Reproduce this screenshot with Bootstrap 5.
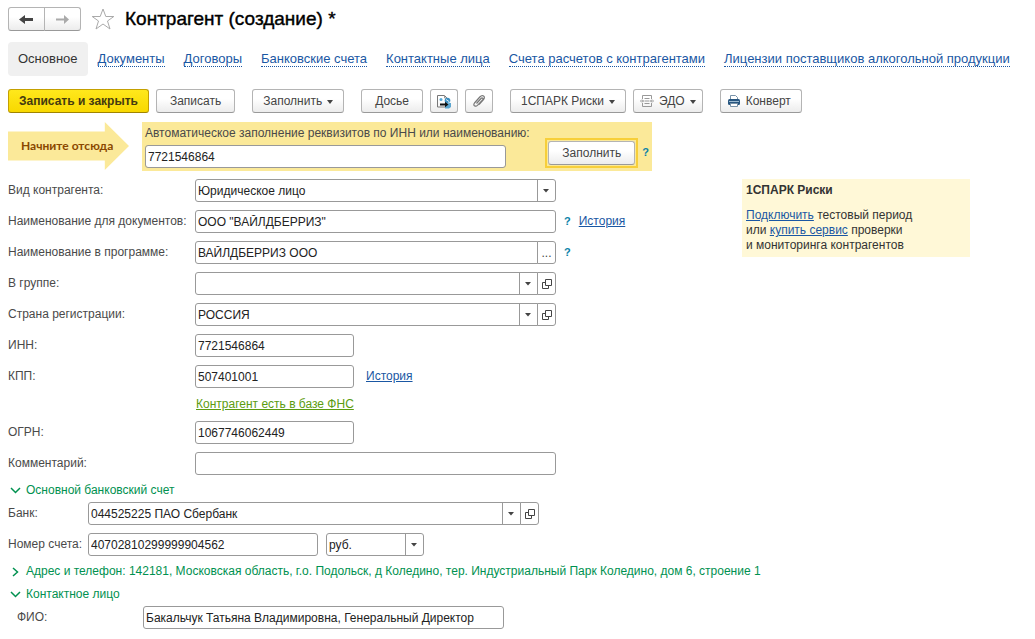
<!DOCTYPE html>
<html lang="ru">
<head>
<meta charset="utf-8">
<meta name="viewport" content="width=device-width, initial-scale=1">
<title>Контрагент (создание)</title>
<link href="https://cdn.jsdelivr.net/npm/bootstrap@5.3.0/dist/css/bootstrap.min.css" rel="stylesheet">
<script defer src="https://cdn.jsdelivr.net/npm/bootstrap@5.3.0/dist/js/bootstrap.bundle.min.js"></script>
<style>
  body { font-family: "Liberation Sans", Arial, sans-serif; font-size: 12px; line-height: 15px; color: #4a4a4a; background: #fff; padding: 7px 8px; }
  a { color: #1a57a3; }

  /* Window title */
  .page-title { font-size: 19px; line-height: 24px; font-weight: 400; color: #000; -webkit-text-stroke: 0.4px #000; }

  /* Section tabs */
  .section-tabs { font-size: 13px; margin-top: 11px; gap: 8px 19px; }
  .section-tabs .nav-link { padding: 0; color: #1a57a3; border-bottom: 1px dotted #1a57a3; line-height: 15px; }
  .section-tabs .nav-link.active { padding: 10px; margin-right: -9px; line-height: 14px; border: 0; border-radius: 4px; background: #f0f0f0; color: #333; }

  /* Buttons */
  .tool { --bs-btn-font-size: 12px; --bs-btn-line-height: 15px; --bs-btn-padding-x: 13px; --bs-btn-padding-y: 3px; --bs-btn-border-radius: 3px; --bs-btn-color: #444; --bs-btn-border-color: #b4b4b4; height: 24px; background: linear-gradient(#fff 40%, #ececec); border-bottom-color: #999; display: inline-flex; align-items: center; justify-content: center; gap: 5px; white-space: nowrap; }
  .tool-main { --bs-btn-padding-x: 10px; --bs-btn-color: #443a10; --bs-btn-border-color: #c4a000; border-bottom-color: #a08400; background: linear-gradient(#ffe81c, #f8d800); font-weight: 700; }
  .tool-nav { --bs-btn-padding-x: 0; width: 37px; }
  .tool-square { --bs-btn-padding-x: 0; width: 28px; }
  .tool.dropdown-toggle { --bs-btn-padding-x: 10px; }
  .tool.tool-icon { --bs-btn-padding-x: 6px; }
  .tool.dropdown-toggle::after { border-width: 4px 3px 0; margin: 1px 0 0; }
  .toolbar-row { margin-top: 13px; gap: 8px 17px; }
  .tool-set { gap: 7px; }

  /* Quick fill strip */
  .quick-fill { margin-top: 9px; gap: 13px; }
  .start-arrow { width: 121px; height: 48px; flex: none; padding-left: 13px; color: #8a4800; font: 700 12px/48px Lato, "Open Sans", sans-serif; background: #fbe999; clip-path: polygon(0 20%, 80% 20%, 80% 0, 100% 50%, 80% 100%, 80% 80%, 0 80%); }
  .fill-band { background: #fbe999; width: 510px; padding: 3px; }
  .fill-band label { line-height: 16px; }
  .fill-frame { border: 2px solid #f7cf3a; padding: 1px; }

  /* Fields */
  .field { font-size: 12px; line-height: 15px; height: 23px; min-height: 0; padding: 3px 2px; color: #222; border: 1px solid #999; border-radius: 3px; background-color: #fff; }
  .form-select.field { padding: 4px 20px 2px 2px; background-image: url("data:image/svg+xml,%3Csvg xmlns='http://www.w3.org/2000/svg' width='18' height='21'%3E%3Cpath d='M.5 0V21' stroke='%23999'/%3E%3Cpath d='M6 9h6L9 12.500z' fill='%23444'/%3E%3C/svg%3E"); background-size: 18px 21px; background-position: right center; }
  .field-btn { width: 19px; height: 23px; padding: 0; border: 1px solid #999; border-radius: 3px; color: #444; background: #fff; display: flex; align-items: center; justify-content: center; font-size: 12px; }
  .w-full { width: 361px; }
  .w-code { width: 159px; }
  .w-bank { width: 451px; }
  .w-account { width: 230px; }
  .w-money { width: 98px; }
  .lbl { width: 187px; flex: none; white-space: nowrap; }
  .lbl-bank { width: 80px; flex: none; white-space: nowrap; }
  .lbl-person { width: 135px; flex: none; padding-left: 9px; }
  .form-rows { display: grid; row-gap: 8px; }
  .form-main { flex: 0 1 734px; }
  .help-link { color: #0a82a8; font-weight: 700; font-size: 11px; text-decoration: none; }
  .fns-row { margin-left: 188px; line-height: 17px; }
  .fns-row a { color: #5c9c10; }
  .group-head { color: #009150; gap: 5px; padding: 0 0 0 2px; border: 0; background: none; text-align: left; display: flex; align-items: center; }
  .group-head svg { flex: none; }

  .spark { background: #fff8d7; color: #333; flex: 0 0 228px; padding: 4px; }
  .spark-title { font-size: 12px; line-height: 15px; font-weight: 700; margin-bottom: 10px; }
</style>
</head>
<body>
<header class="d-flex align-items-center">
  <div class="btn-group" role="group" aria-label="Навигация">
    <button class="btn tool tool-nav" type="button" aria-label="Назад"><svg width="15" height="11" viewBox="0 0 15 11"><path d="M0 5.500L6 1v3h8v3H6v3z" fill="#444"/></svg></button>
    <button class="btn tool tool-nav" type="button" aria-label="Вперед"><svg width="15" height="11" viewBox="0 0 15 11"><path d="M14 5.500L9 1v3.500H1v2h8V10z" fill="#aaa"/></svg></button>
  </div>
  <svg class="mx-2" width="28" height="24" viewBox="0 0 28 24"><path d="M14 2l2.800 7.500h8L18.500 14l2.500 8-7-5-7 5 2.500-8-6.300-4.500h8z" fill="#fff" stroke="#aaa"/></svg>
  <h1 class="page-title mb-0">Контрагент (создание) *</h1>
</header>

<nav class="nav section-tabs align-items-center">
  <a class="nav-link active" aria-current="page" href="#">Основное</a>
  <a class="nav-link" href="#">Документы</a>
  <a class="nav-link" href="#">Договоры</a>
  <a class="nav-link" href="#">Банковские счета</a>
  <a class="nav-link" href="#">Контактные лица</a>
  <a class="nav-link" href="#">Счета расчетов с контрагентами</a>
  <a class="nav-link" href="#">Лицензии поставщиков алкогольной продукции</a>
</nav>

<div class="toolbar-row d-flex flex-wrap" role="toolbar" aria-label="Команды">
  <div class="tool-set d-flex">
    <button class="btn tool tool-main" type="button">Записать и закрыть</button>
    <button class="btn tool" type="button">Записать</button>
  </div>
  <button class="btn tool dropdown-toggle" type="button">Заполнить</button>
  <div class="tool-set d-flex">
    <button class="btn tool" type="button">Досье</button>
    <button class="btn tool tool-square" type="button" aria-label="Загрузить данные"><svg width="16" height="16" viewBox="0 0 16 16"><path d="M1.500 14V2.500h7L11 5v2M1.500 14h8" fill="none" stroke="#777"/><path d="M8.500 2.500V5H11" fill="none" stroke="#999"/><circle cx="5" cy="6.500" r="1.500" fill="#58a9d6"/><circle cx="11.500" cy="7.500" r="2.800" fill="#3d8fc0"/><path d="M9 10h6v4l-2 1.500H9z" fill="#5aa5cf"/><path d="M10 6.500l3 2M12 10.500l2-2" stroke="#d5edf8"/><path d="M4 10.500h5V8.800l3.500 2.700L9 14.200v-1.700H4z" fill="#111"/></svg></button>
    <button class="btn tool tool-square" type="button" aria-label="Присоединенные файлы"><svg width="14" height="14" viewBox="0 0 14 14"><path d="M4.500 9.500L9 4.500c1.200-1.300 2.800 0 1.600 1.400L5.500 11.300c-2 2-5 .2-3-2.300l5.300-6C10.500.2 14 2.500 11.500 5.500L7 10.500" fill="none" stroke="#777" stroke-width="1.200"/></svg></button>
  </div>
  <div class="tool-set d-flex">
    <button class="btn tool dropdown-toggle" type="button">1СПАРК Риски</button>
    <button class="btn tool tool-icon dropdown-toggle" type="button"><svg width="14" height="14" viewBox="0 0 14 14" fill="none" stroke="#999"><path d="M2.500 5V1.500h9V5M2.500 9v3.500h9V9M4.500 4.500h5M4.500 7h5M4.500 9.500h5"/><path d="M0 7h3.500M10.500 7H14M2 5.500L3.500 7 2 8.500M12 5.500L10.500 7 12 8.500"/></svg>ЭДО</button>
  </div>
  <button class="btn tool tool-icon" type="button"><svg width="14" height="14" viewBox="0 0 14 14"><path d="M3.500 5V1.500h5L10.500 3.500V5" fill="#fff" stroke="#7892a8"/><rect x="1" y="5" width="12" height="6" rx="1.500" fill="#285680"/><path d="M2 7.500h10" stroke="#9dbbd2"/><path d="M3.500 9.500h7v3h-7z" fill="#fff" stroke="#7892a8"/></svg><span class="pe-1">Конверт</span></button>
</div>

<form>
<div class="quick-fill d-flex">
  <div class="start-arrow">Начните отсюда</div>
  <div class="fill-band d-flex align-items-end">
    <div class="flex-grow-1">
      <label class="d-block mb-1" for="auto">Автоматическое заполнение реквизитов по ИНН или наименованию:</label>
      <input class="form-control field w-full" id="auto" value="7721546864">
    </div>
    <div class="fill-frame"><button class="btn tool" type="button">Заполнить</button></div>
    <a class="help-link ps-1 pe-0 pb-2" href="#">?</a>
  </div>
</div>

<div class="d-flex mt-2">
  <div class="form-main form-rows">
    <div class="d-flex align-items-center">
      <label class="lbl" for="kind">Вид контрагента:</label>
      <select class="form-select field w-full" id="kind"><option>Юридическое лицо</option></select>
    </div>
    <div class="d-flex align-items-center">
      <label class="lbl" for="docname">Наименование для документов:</label>
      <input class="form-control field w-full" id="docname" value="ООО &quot;ВАЙЛДБЕРРИЗ&quot;">
      <a class="help-link ps-1 ms-1" href="#">?</a>
      <a class="ms-2" href="#">История</a>
    </div>
    <div class="d-flex align-items-center">
      <label class="lbl" for="progname">Наименование в программе:</label>
      <div class="input-group w-full flex-nowrap">
        <input class="form-control field" id="progname" value="ВАЙЛДБЕРРИЗ ООО">
        <button class="btn field-btn" type="button" aria-label="Выбрать">...</button>
      </div>
      <a class="help-link ps-1 ms-1" href="#">?</a>
    </div>
    <div class="d-flex align-items-center">
      <label class="lbl" for="parent">В группе:</label>
      <div class="input-group w-full flex-nowrap">
        <select class="form-select field" id="parent"><option></option></select>
        <button class="btn field-btn" type="button" aria-label="Открыть"><svg width="10" height="10" viewBox="0 0 10 10" fill="none" stroke="#444"><path d="M3.500.5h6v6h-6zM3.500 3.500h-3v6h6v-3"/></svg></button>
      </div>
    </div>
    <div class="d-flex align-items-center">
      <label class="lbl" for="country">Страна регистрации:</label>
      <div class="input-group w-full flex-nowrap">
        <select class="form-select field" id="country"><option>РОССИЯ</option></select>
        <button class="btn field-btn" type="button" aria-label="Открыть"><svg width="10" height="10" viewBox="0 0 10 10" fill="none" stroke="#444"><path d="M3.500.5h6v6h-6zM3.500 3.500h-3v6h6v-3"/></svg></button>
      </div>
    </div>
    <div class="d-flex align-items-center">
      <label class="lbl" for="inn">ИНН:</label>
      <input class="form-control field w-code" id="inn" value="7721546864">
    </div>
    <div class="d-flex align-items-center">
      <label class="lbl" for="kpp">КПП:</label>
      <input class="form-control field w-code" id="kpp" value="507401001">
      <a class="ms-2 ps-1" href="#">История</a>
    </div>
    <div class="fns-row"><a href="#">Контрагент есть в базе ФНС</a></div>
    <div class="d-flex align-items-center">
      <label class="lbl" for="ogrn">ОГРН:</label>
      <input class="form-control field w-code" id="ogrn" value="1067746062449">
    </div>
    <div class="d-flex align-items-center">
      <label class="lbl" for="comment">Комментарий:</label>
      <input class="form-control field w-full" id="comment">
    </div>
  </div>
  <aside class="spark align-self-start">
    <h2 class="spark-title">1СПАРК Риски</h2>
    <p class="mb-0"><a href="#">Подключить</a> тестовый период<br>или <a href="#">купить сервис</a> проверки<br>и мониторинга контрагентов</p>
  </aside>
</div>

<button class="group-head mt-2 mb-1" type="button" aria-expanded="true"><svg width="11" height="9" viewBox="0 0 11 9"><path d="M1 2l4.500 4.500L10 2" fill="none" stroke="#009150" stroke-width="1.500"/></svg>Основной банковский счет</button>
<div class="form-rows">
  <div class="d-flex align-items-center">
    <label class="lbl-bank" for="bank">Банк:</label>
    <div class="input-group w-bank flex-nowrap">
      <select class="form-select field" id="bank"><option>044525225 ПАО Сбербанк</option></select>
      <button class="btn field-btn" type="button" aria-label="Открыть"><svg width="10" height="10" viewBox="0 0 10 10" fill="none" stroke="#444"><path d="M3.500.5h6v6h-6zM3.500 3.500h-3v6h6v-3"/></svg></button>
    </div>
  </div>
  <div class="d-flex align-items-center">
    <label class="lbl-bank" for="account">Номер счета:</label>
    <input class="form-control field w-account" id="account" value="40702810299999904562">
    <select class="form-select field w-money ms-2" aria-label="Валюта"><option>руб.</option></select>
  </div>
  <button class="group-head" type="button" aria-expanded="false"><svg width="11" height="10" viewBox="0 0 11 10"><path d="M3 1l4.500 4L3 9" fill="none" stroke="#009150" stroke-width="1.500"/></svg>Адрес и телефон: 142181, Московская область, г.о. Подольск, д Коледино, тер. Индустриальный Парк Коледино, дом 6, строение 1</button>
  <button class="group-head" type="button" aria-expanded="true"><svg width="11" height="9" viewBox="0 0 11 9"><path d="M1 2l4.500 4.500L10 2" fill="none" stroke="#009150" stroke-width="1.500"/></svg>Контактное лицо</button>
</div>
<div class="d-flex align-items-center mt-1">
  <label class="lbl-person" for="person">ФИО:</label>
  <input class="form-control field w-full" id="person" value="Бакальчук Татьяна Владимировна, Генеральный Директор">
</div>
</form>
</body>
</html>
